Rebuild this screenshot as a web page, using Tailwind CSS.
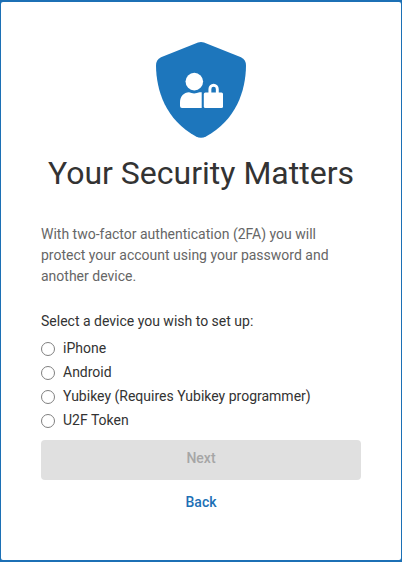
<!DOCTYPE html>
<html lang="en">
<head>
  <meta charset="UTF-8">
  <meta name="viewport" content="width=device-width, initial-scale=1.0">
  <title>Two-Factor Setup</title>
  <script src="https://cdn.jsdelivr.net/npm/@tailwindcss/browser@4"></script>
</head>
<body class="bg-[#1c70b5] font-['Roboto',sans-serif] text-sm">
  <main class="h-[562px] w-[402px] overflow-hidden px-px py-0.5">
    <div class="h-full rounded-[2px] bg-white px-10 pt-10">
      <!-- Shield logo -->
      <svg class="mx-auto block h-24 w-[90px]" viewBox="0 0 90 96" fill="none" xmlns="http://www.w3.org/2000/svg">
        <path fill="#1d76bc" d="M42 .6Q45-.4 48 .6L85 15.2Q90 17.6 90 23.5C89.8 49 80 78 50 94.6Q45 97 40 94.6C10 78 .2 49 0 23.5Q0 17.6 5 15.2Z"/>
        <circle cx="38.3" cy="39.6" r="8.8" fill="#fff"/>
        <path fill="#fff" d="M24 64V60.500C24 54.500 28 50.300 33 50.300Q38 52.600 43.500 50.300H45.700V66H26Q24 66 24 64Z"/>
        <rect x="47.8" y="50.5" width="19.2" height="15.500" rx="1.500" fill="#fff"/>
        <path stroke="#fff" stroke-width="2.900" d="M53.900 52V47A3.700 3.700 0 0 1 61.300 47V52"/>
      </svg>

      <h1 class="mt-3.5 text-center text-[32px] leading-[42px] whitespace-nowrap text-[#333]">Your Security Matters</h1>

      <p class="mt-[30px] leading-[21px] text-[#666]">With two-factor authentication (2FA) you will protect your account using your password and another device.</p>

      <!-- Device choices -->
      <form>
        <p class="mt-6 mb-1 leading-[21px] text-[#333]">Select a device you wish to set up:</p>
        <div class="text-[#333]">
          <label class="flex h-6 items-center gap-2">
            <input type="radio" name="device" class="mt-0.5 size-3.5 appearance-none rounded-full border border-[#808080]">
            <span>iPhone</span>
          </label>
          <label class="flex h-6 items-center gap-2">
            <input type="radio" name="device" class="mt-0.5 size-3.5 appearance-none rounded-full border border-[#808080]">
            <span>Android</span>
          </label>
          <label class="flex h-6 items-center gap-2">
            <input type="radio" name="device" class="mt-0.5 size-3.5 appearance-none rounded-full border border-[#808080]">
            <span>Yubikey (Requires Yubikey programmer)</span>
          </label>
          <label class="flex h-6 items-center gap-2">
            <input type="radio" name="device" class="mt-0.5 size-3.5 appearance-none rounded-full border border-[#808080]">
            <span>U2F Token</span>
          </label>
        </div>
        <button type="button" disabled class="mt-2 block h-10 w-full rounded bg-[#e0e0e0] pb-1 font-medium text-[#a6a6a6]">Next</button>
        <a href="#" class="mt-3 block text-center leading-5 font-medium text-[#1d70b5]">Back</a>
      </form>
    </div>
  </main>
</body>
</html>
